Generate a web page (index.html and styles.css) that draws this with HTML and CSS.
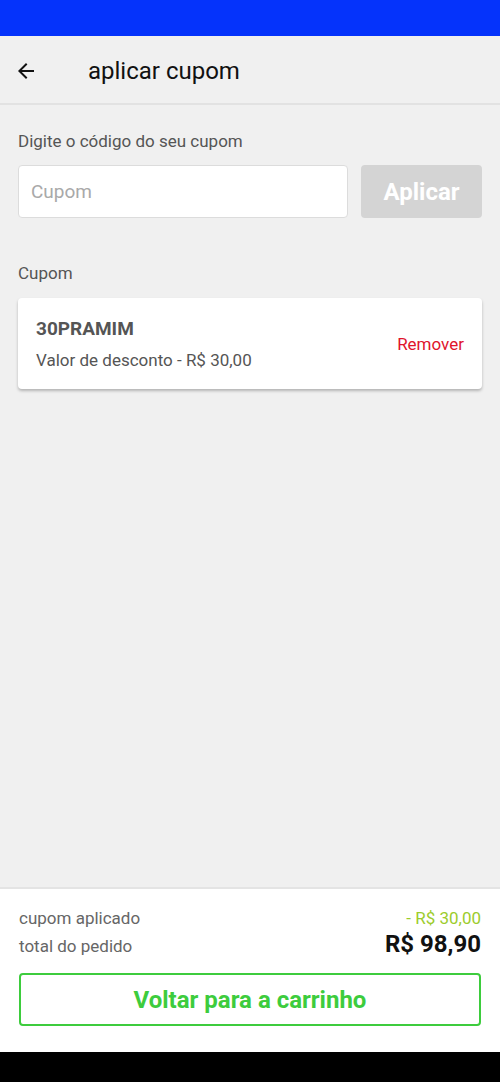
FILE: index.html
```html
<!DOCTYPE html>
<html lang="pt-BR">

<head>
    <meta charset="UTF-8">
    <meta name="viewport" content="width=device-width, initial-scale=1.0">
    <title>Aplicar cupom</title>
    <link rel="stylesheet" href="styles.css">
</head>

<body>
    <div class="status-bar"></div>

    <header class="app-bar">
        <button class="back-btn" aria-label="Voltar">
            <svg width="24" height="24" viewBox="0 0 24 24">
                <path d="M20 11H7.83l5.59-5.59L12 4l-8 8 8 8 1.41-1.41L7.83 13H20v-2z" fill="#111"/>
            </svg>
        </button>
        <h1>aplicar cupom</h1>
    </header>

    <main class="content">
        <p class="label">Digite o código do seu cupom</p>
        <div class="coupon-form">
            <input type="text" class="coupon-input" placeholder="Cupom">
            <button class="apply-btn">Aplicar</button>
        </div>

        <p class="label section-label">Cupom</p>
        <div class="coupon-card">
            <div class="coupon-info">
                <div class="coupon-code">30PRAMIM</div>
                <div class="coupon-value">Valor de desconto - R$ 30,00</div>
            </div>
            <button class="remove-btn">Remover</button>
        </div>
    </main>

    <!-- Order summary -->
    <footer class="summary">
        <div class="summary-row">
            <span class="summary-label">cupom aplicado</span>
            <span class="discount">- R$ 30,00</span>
        </div>
        <div class="summary-row">
            <span class="summary-label">total do pedido</span>
            <span class="total">R$ 98,90</span>
        </div>
        <button class="back-cart-btn">Voltar para a carrinho</button>
    </footer>

    <div class="nav-bar"></div>
</body>

</html>
```

FILE: styles.css
```css
/* General layout */
body {
    margin: 0;
    font-family: Roboto, 'Noto Sans', sans-serif;
    background-color: #f0f0f0;
    display: flex;
    flex-direction: column;
    min-height: 100vh;
    color: #555;
}

.status-bar {
    height: 36px;
    background-color: #0533fb;
}

.app-bar {
    height: 69px;
    padding-top: 2px;
    display: flex;
    align-items: center;
    background-color: #f0f0f0;
    border-bottom: 2px solid #e2e2e2;
    box-sizing: border-box;
}

.back-btn {
    border: none;
    background: none;
    padding: 0;
    margin-left: 14px;
    width: 24px;
    height: 24px;
    display: flex;
}

.app-bar h1 {
    margin: 0 0 0 50px;
    font-size: 24px;
    font-weight: 400;
    color: #111;
}

.content {
    flex: 1;
    padding: 0 18px;
}

.label {
    margin: 26px 0 14px;
    font-size: 17px;
    color: #555;
    line-height: 20px;
}

.section-label {
    margin-top: 45px;
    margin-bottom: 15px;
}

/* Coupon input */
.coupon-form {
    display: flex;
    gap: 13px;
}

.coupon-input {
    flex: 1;
    height: 53px;
    box-sizing: border-box;
    border: 1px solid #dcdcdc;
    border-radius: 4px;
    padding: 0 12px;
    font-family: inherit;
    font-size: 19px;
    color: #333;
    background: #fff;
}

.coupon-input::placeholder {
    color: #a9a9a9;
}

.apply-btn {
    width: 121px;
    height: 53px;
    border: none;
    border-radius: 4px;
    background-color: #d4d4d4;
    color: #fff;
    font-family: inherit;
    font-size: 24px;
    font-weight: 700;
}

/* Coupon card */
.coupon-card {
    background: #fff;
    border-radius: 4px;
    height: 91px;
    box-sizing: border-box;
    padding: 0 18px;
    display: flex;
    align-items: center;
    justify-content: space-between;
    box-shadow: 0 2px 3px rgba(0, 0, 0, 0.25);
}

.coupon-code {
    font-size: 19px;
    line-height: 22px;
    font-weight: 700;
    color: #555;
    margin-bottom: 10px;
}

.coupon-value {
    font-size: 17px;
    line-height: 20px;
    color: #555;
}

.remove-btn {
    border: none;
    background: none;
    padding: 0;
    font-family: inherit;
    font-size: 17px;
    color: #e0142c;
}

/* Order summary */
.summary {
    background: #fff;
    border-top: 2px solid #e4e4e4;
    padding: 16px 19px 26px;
}

.summary-row {
    display: flex;
    justify-content: space-between;
    align-items: baseline;
    height: 26px;
    line-height: 26px;
}

.summary-label {
    font-size: 17px;
    color: #666;
}

.discount {
    font-size: 17px;
    color: #9ccc2c;
}

.total {
    font-size: 24px;
    font-weight: 700;
    color: #111;
}

.back-cart-btn {
    display: block;
    width: 100%;
    height: 53px;
    margin-top: 16px;
    background: #fff;
    border: 2px solid #3dcc3d;
    border-radius: 4px;
    color: #3dcc3d;
    font-family: inherit;
    font-size: 24px;
    font-weight: 700;
}

.nav-bar {
    height: 30px;
    background-color: #000;
}
```
